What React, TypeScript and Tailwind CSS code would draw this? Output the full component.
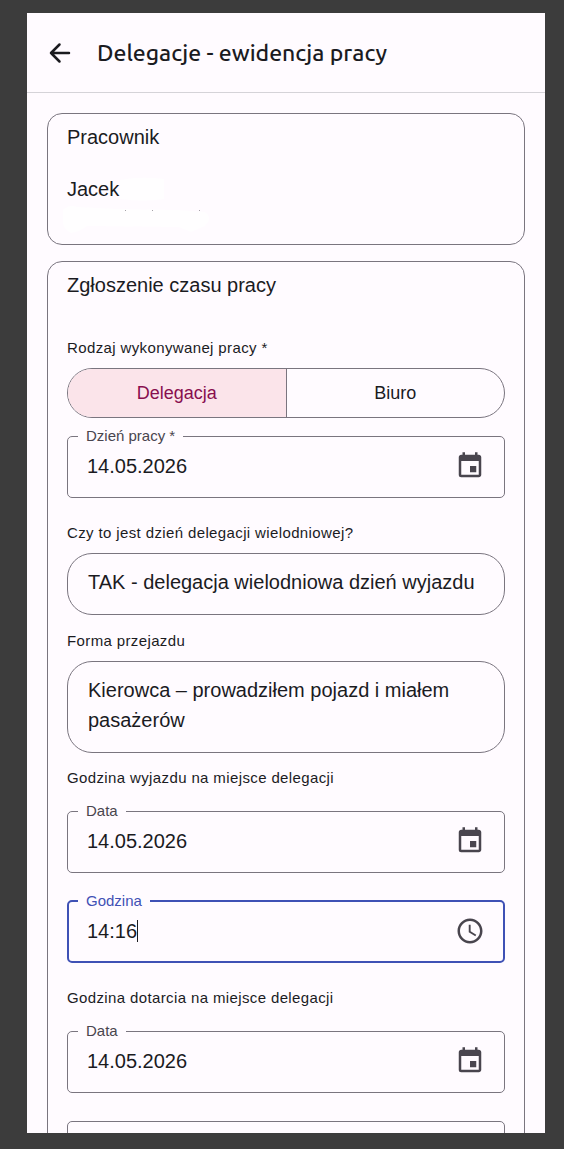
import { useState } from "react";
import clsx from "clsx";
import { MdEvent, MdSchedule } from "react-icons/md";

type FieldProps = {
  id: string;
  label: string;
  value: string;
  onChange: (value: string) => void;
  icon: "date" | "time";
  focused?: boolean;
  className?: string;
};

function OutlinedField({
  id,
  label,
  value,
  onChange,
  icon,
  focused,
  className,
}: FieldProps) {
  const Icon = icon === "date" ? MdEvent : MdSchedule;

  return (
    <fieldset
      className={clsx(
        "h-18 min-w-0 rounded-[5px]",
        focused ? "border-2 border-[#3f51b5]" : "border border-[#7a757f]",
        className,
      )}
    >
      <legend
        className={clsx(
          "px-2 text-[15px] leading-5",
          focused ? "ml-[9px] text-[#3f51b5]" : "ml-2.5 text-[#49454e]",
        )}
      >
        <label htmlFor={id}>{label}</label>
      </legend>
      <div
        className={clsx(
          "-mt-2.5 flex h-15 items-center",
          focused ? "px-[18px]" : "px-[19px]",
        )}
      >
        <input
          id={id}
          value={value}
          onChange={(e) => onChange(e.target.value)}
          className={clsx(
            "h-[30px] min-w-0 bg-transparent text-xl outline-none",
            focused ? "[field-sizing:content] caret-transparent" : "flex-1",
          )}
        />
        {focused && <span className="h-[22px] w-px bg-[#1b1b1f]" />}
        <button
          type="button"
          aria-label={icon === "date" ? "Wybierz datę" : "Wybierz godzinę"}
          className="ml-auto text-[#49454e]"
        >
          <Icon size={30} />
        </button>
      </div>
    </fieldset>
  );
}

function GroupLabel({
  children,
  className,
}: {
  children: React.ReactNode;
  className?: string;
}) {
  return (
    <p className={clsx("text-[15px] leading-5 tracking-wide", className)}>
      {children}
    </p>
  );
}

function ChoiceButton({ children }: { children: React.ReactNode }) {
  return (
    <button
      type="button"
      className="mt-2.5 block w-full rounded-[25px] border border-[#7a757f] px-5 pt-[13px] pb-[17px] text-left text-xl leading-[30px]"
    >
      {children}
    </button>
  );
}

function HiddenDetails() {
  return (
    <svg width="160" height="60" className="-ml-1" aria-hidden="true">
      <path
        d="M58 6q20-4 44-1v20q-20 3-44 0zM1 36q6-6 14-3l40 2 60 1 28 2q8 6 0 14l-14 6-12-5-92-1q-8 6-16 7-8-4-8-10z"
        fill="#fffeff"
      />
      <path d="M63 36.500h1M90 36.500h1M137 36.500h1" stroke="#a5a2a8" />
    </svg>
  );
}

export default function App() {
  const [work, setWork] = useState("Delegacja");
  const [workDay, setWorkDay] = useState("14.05.2026");
  const [departureDate, setDepartureDate] = useState("14.05.2026");
  const [departureTime, setDepartureTime] = useState("14:16");
  const [arrivalDate, setArrivalDate] = useState("14.05.2026");
  const [arrivalTime, setArrivalTime] = useState("");

  return (
    <div className="flex h-screen flex-col bg-[#3c3c3c] pt-[13px] pr-[19px] pb-4 pl-[27px] font-['Liberation_Sans',Arial,sans-serif] text-[#1b1b1f]">
      <header className="flex h-20 shrink-0 items-center border-b border-[#d5d3d8] bg-[#fffbff] px-[18px]">
        <button type="button" aria-label="Wstecz">
          <svg width="30" height="30" viewBox="0 0 30 30" fill="none">
            <path
              d="M24 15H6M14.500 6.500 6 15l8.500 8.500"
              stroke="currentColor"
              strokeWidth="2.500"
              strokeLinecap="round"
              strokeLinejoin="round"
            />
          </svg>
        </button>
        <h1 className="ml-[22px] font-[Ubuntu,'Noto_Sans',sans-serif] text-[23px] leading-[30px] font-medium">
          Delegacje - ewidencja pracy
        </h1>
      </header>

      <main className="min-h-0 flex-1 overflow-y-auto bg-[#fffbff] px-5 pt-5 [scrollbar-width:none]">
        <section className="rounded-[15px] border border-[#7a757f] px-[19px] pt-2 pb-2.5">
          <h2 className="text-xl leading-[30px]">Pracownik</h2>
          <div className="mt-[22px] flex h-15">
            <p className="text-xl leading-[30px]">Jacek</p>
            <div className="-ml-[53px]">
              <HiddenDetails />
            </div>
          </div>
        </section>

        <section className="mt-4 rounded-[15px] border border-[#7a757f] px-[19px] pt-2 pb-5">
          <h2 className="text-xl leading-[30px]">Zgłoszenie czasu pracy</h2>

          <GroupLabel className="mt-[38px]">Rodzaj wykonywanej pracy *</GroupLabel>
          <div className="mt-2.5 flex h-[50px] divide-x divide-[#7a757f] overflow-hidden rounded-full border border-[#7a757f]">
            {["Delegacja", "Biuro"].map((name) => (
              <button
                key={name}
                type="button"
                aria-pressed={work === name}
                onClick={() => setWork(name)}
                className={clsx(
                  "flex-1 text-lg",
                  work === name && "bg-[#fbe4ea] text-[#880e4f]",
                )}
              >
                {name}
              </button>
            ))}
          </div>
          <OutlinedField
            id="work-day"
            label="Dzień pracy *"
            value={workDay}
            onChange={setWorkDay}
            icon="date"
            className="mt-2"
          />

          <GroupLabel className="mt-[25px]">
            Czy to jest dzień delegacji wielodniowej?
          </GroupLabel>
          <ChoiceButton>TAK - delegacja wielodniowa dzień wyjazdu</ChoiceButton>

          <GroupLabel className="mt-4">Forma przejazdu</GroupLabel>
          <ChoiceButton>
            Kierowca – prowadziłem pojazd i miałem pasażerów
          </ChoiceButton>

          <GroupLabel className="mt-[15px]">
            Godzina wyjazdu na miejsce delegacji
          </GroupLabel>
          <OutlinedField
            id="departure-date"
            label="Data"
            value={departureDate}
            onChange={setDepartureDate}
            icon="date"
            className="mt-[13px]"
          />
          <OutlinedField
            id="departure-time"
            label="Godzina"
            value={departureTime}
            onChange={setDepartureTime}
            icon="time"
            focused
            className="mt-[18px]"
          />

          <GroupLabel className="mt-[25px]">
            Godzina dotarcia na miejsce delegacji
          </GroupLabel>
          <OutlinedField
            id="arrival-date"
            label="Data"
            value={arrivalDate}
            onChange={setArrivalDate}
            icon="date"
            className="mt-[13px]"
          />
          <input
            aria-label="Godzina"
            value={arrivalTime}
            onChange={(e) => setArrivalTime(e.target.value)}
            className="mt-7 h-[62px] w-full rounded-[5px] border border-[#7a757f] px-[19px] text-xl"
          />
        </section>
      </main>
    </div>
  );
}
